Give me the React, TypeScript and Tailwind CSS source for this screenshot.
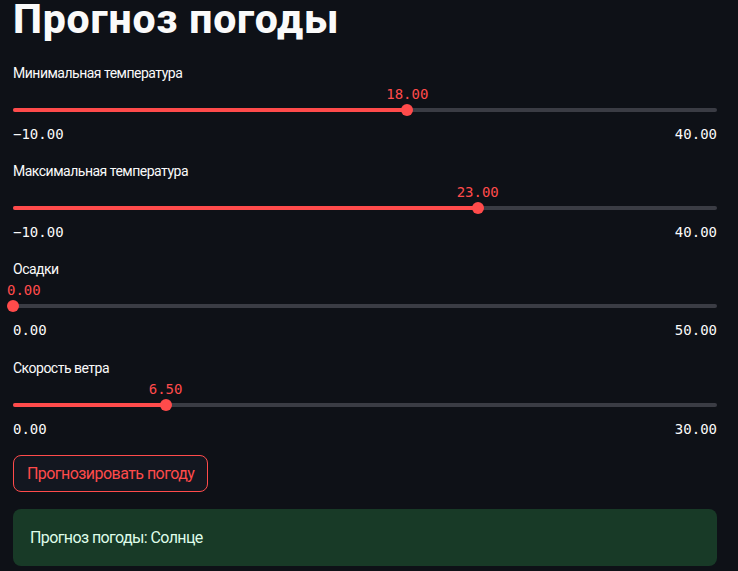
import React from "react";

type SliderProps = {
    label: string;
    min: number;
    max: number;
    value: number;
    last?: boolean;
};

const fmt = (n: number) => n.toFixed(2).replace("-", "−");

// one st.slider-like block: label, value bubble, track, min/max row
const Slider = ({ label, min, max, value, last }: SliderProps) => {
    const frac = (value - min) / (max - min);
    const text = fmt(value);
    const textW = text.length * 8.4;
    const trackW = 704;
    const center = frac * trackW;
    const left = Math.max(center - textW / 2, -6);

    return (
        <div className={last ? "mt-[18px]" : "mt-[17px] first:mt-0"}>
            <div className="h-[20px] text-[14px] leading-[20px] tracking-[-0.5px] text-[#fafafa]">{label}</div>
            <div className="relative h-[21px] font-['DejaVu_Sans_Mono',monospace] text-[14px] leading-[20px] text-[#ff4b4b]">
                <span className="absolute top-[1px] whitespace-nowrap" style={{ left }}>{text}</span>
            </div>
            <div className="relative h-[12px]">
                <div className="absolute left-0 right-0 top-[4px] h-[4px] rounded-full bg-[#3a3c44]" />
                <div className="absolute left-0 top-[4px] h-[4px] rounded-full bg-[#ff4b4b]" style={{ width: center }} />
                <div className="absolute top-0 h-[12px] w-[12px] rounded-full bg-[#ff4b4b]" style={{ left: center - 6 }} />
            </div>
            <div className="mt-[8px] flex h-[20px] justify-between font-['DejaVu_Sans_Mono',monospace] text-[14px] leading-[20px] text-[#fafafa]">
                <span>{fmt(min)}</span>
                <span>{fmt(max)}</span>
            </div>
        </div>
    );
};

const App = () => {
    return (
        <div className="h-[571px] w-[738px] overflow-hidden bg-[#0e1117] font-['Roboto','Noto_Sans',sans-serif]">
            <div className="w-[704px] ml-[13px]">
                {/* Title */}
                <h1 className="-mt-[5px] mb-[20px] text-[41px] font-extrabold leading-[48px] tracking-[0.8px] text-[#fafafa]">
                    Прогноз погоды
                </h1>
                {/* Sliders */}
                <div className="flex flex-col">
                    <Slider label="Минимальная температура" min={-10} max={40} value={18} />
                    <Slider label="Максимальная температура" min={-10} max={40} value={23} />
                    <Slider label="Осадки" min={0} max={50} value={0} />
                    <Slider label="Скорость ветра" min={0} max={30} value={6.5} last />
                </div>
                {/* Button */}
                <button className="mt-[16px] h-[37px] rounded-[8px] border border-[#ff4b4b] bg-[#131720] px-[13px] text-[16px] tracking-[-0.55px] text-[#ff4b4b]">
                    Прогнозировать погоду
                </button>
                {/* Result */}
                <div className="mt-[17px] flex h-[57px] items-center rounded-[8px] bg-[#183a27] px-[17px] text-[16px] tracking-[-0.6px] text-[#dffde9]">
                    Прогноз погоды: Солнце
                </div>
            </div>
        </div>
    );
};

export default App;
